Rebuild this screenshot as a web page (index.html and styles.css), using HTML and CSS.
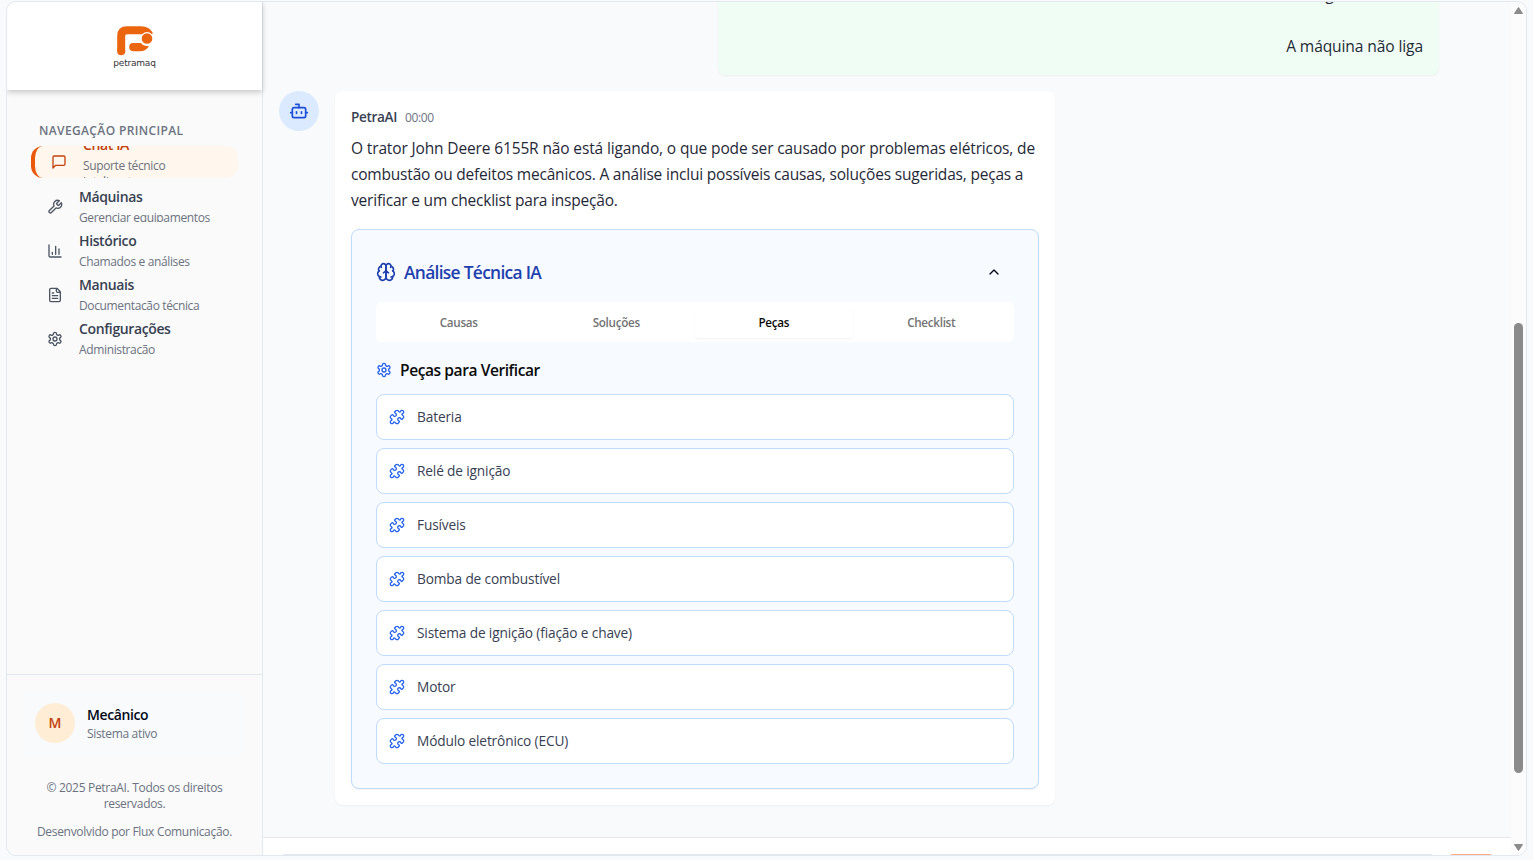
FILE: index.html
```html
<!DOCTYPE html>
<html lang="pt-BR">
<head>
<meta charset="utf-8">
<title>PetraAI</title>
<link rel="stylesheet" href="styles.css">
</head>
<body>
<svg class="defs" width="0" height="0">
  <defs>
    <symbol id="gear" viewBox="0 0 24 24"><path d="M12.22 2h-.44a2 2 0 0 0-2 2v.18a2 2 0 0 1-1 1.73l-.43.25a2 2 0 0 1-2 0l-.15-.08a2 2 0 0 0-2.73.73l-.22.38a2 2 0 0 0 .73 2.73l.15.1a2 2 0 0 1 1 1.72v.51a2 2 0 0 1-1 1.74l-.15.09a2 2 0 0 0-.73 2.73l.22.38a2 2 0 0 0 2.73.73l.15-.08a2 2 0 0 1 2 0l.43.25a2 2 0 0 1 1 1.73V20a2 2 0 0 0 2 2h.44a2 2 0 0 0 2-2v-.18a2 2 0 0 1 1-1.73l.43-.25a2 2 0 0 1 2 0l.15.08a2 2 0 0 0 2.73-.73l.22-.39a2 2 0 0 0-.73-2.73l-.15-.08a2 2 0 0 1-1-1.74v-.5a2 2 0 0 1 1-1.74l.15-.09a2 2 0 0 0 .73-2.73l-.22-.38a2 2 0 0 0-2.73-.73l-.15.08a2 2 0 0 1-2 0l-.43-.25a2 2 0 0 1-1-1.73V4a2 2 0 0 0-2-2z"/><circle cx="12" cy="12" r="3"/></symbol>
    <symbol id="puzzle" viewBox="0 0 24 24"><path d="M19.439 7.85c-.049.322.059.648.289.878l1.568 1.568c.47.47.706 1.087.706 1.704s-.235 1.233-.706 1.704l-1.611 1.611a.98.98 0 0 1-.837.276c-.47-.07-.802-.48-.968-.925a2.501 2.501 0 1 0-3.214 3.214c.446.166.855.497.925.968a.979.979 0 0 1-.276.837l-1.61 1.61a2.404 2.404 0 0 1-1.705.707 2.402 2.402 0 0 1-1.704-.706l-1.568-1.568a1.026 1.026 0 0 0-.877-.29c-.493.074-.84.504-1.02.968a2.5 2.5 0 1 1-3.237-3.237c.464-.18.894-.527.967-1.02a1.026 1.026 0 0 0-.289-.877l-1.568-1.568A2.402 2.402 0 0 1 1.998 12c0-.617.236-1.234.706-1.704L4.23 8.77c.24-.24.581-.353.917-.303.515.077.877.528 1.073 1.01a2.5 2.5 0 1 0 3.259-3.259c-.482-.196-.933-.558-1.01-1.073-.05-.336.062-.676.303-.917l1.525-1.525A2.402 2.402 0 0 1 12 1.998c.617 0 1.234.236 1.704.706l1.568 1.568c.23.23.556.338.877.29.493-.074.84-.504 1.02-.968a2.5 2.5 0 1 1 3.237 3.237c-.464.18-.894.527-.967 1.02Z"/></symbol>
  </defs>
</svg>
<div class="app">
  <aside class="sidebar">
    <header class="brand">
      <svg class="brand-mark" viewBox="0 0 38 31">
        <path d="M5.200 25.500V10Q5.200 4.200 11 4.200H25Q31 4.200 33.500 9" fill="none" stroke="#ea650d" stroke-width="8"/>
        <circle cx="5.200" cy="25.300" r="4" fill="#ea650d"/>
        <path d="M17 17H25Q27.500 20.300 33 20.200Q30 25.200 24 25.200H17Q13.200 25.200 13.200 21.100T17 17Z" fill="#ea650d"/>
        <circle cx="31" cy="12.500" r="6.500" fill="#fff"/>
        <circle cx="31" cy="12.500" r="5.300" fill="#ea650d"/>
      </svg>
      <span class="brand-name">petramaq</span>
    </header>
    <nav class="nav">
      <h2 class="nav-title">NAVEGAÇÃO PRINCIPAL</h2>
      <a class="nav-item active">
        <svg class="icon i16" viewBox="0 0 24 24"><path d="M21 15a2 2 0 0 1-2 2H7l-4 4V5a2 2 0 0 1 2-2h14a2 2 0 0 1 2 2z"/></svg>
        <div class="nav-text"><b>Chat IA</b><span>Suporte técnico inteligente</span></div>
      </a>
      <a class="nav-item">
        <svg class="icon i16" viewBox="0 0 24 24"><path d="M14.700 6.300a1 1 0 0 0 0 1.400l1.600 1.600a1 1 0 0 0 1.400 0l3.770-3.770a6 6 0 0 1-7.940 7.940l-6.910 6.910a2.120 2.120 0 0 1-3-3l6.910-6.910a6 6 0 0 1 7.940-7.940l-3.760 3.760z"/></svg>
        <div class="nav-text"><b>Máquinas</b><span>Gerenciar equipamentos</span></div>
      </a>
      <a class="nav-item">
        <svg class="icon i16" viewBox="0 0 24 24"><path d="M3 3v16a2 2 0 0 0 2 2h16M18 17V9M13 17V5M8 17v-3"/></svg>
        <div class="nav-text"><b>Histórico</b><span>Chamados e análises</span></div>
      </a>
      <a class="nav-item">
        <svg class="icon i16" viewBox="0 0 24 24"><path d="M15 2H6a2 2 0 0 0-2 2v16a2 2 0 0 0 2 2h12a2 2 0 0 0 2-2V7ZM14 2v4a2 2 0 0 0 2 2h4M10 9H8M16 13H8M16 17H8"/></svg>
        <div class="nav-text"><b>Manuais</b><span>Documentação técnica</span></div>
      </a>
      <a class="nav-item">
        <svg class="icon i16"><use href="#gear"/></svg>
        <div class="nav-text"><b>Configurações</b><span>Administração</span></div>
      </a>
    </nav>
    <footer class="side-foot">
      <div class="user">
        <div class="user-avatar">M</div>
        <div class="user-text"><b>Mecânico</b><span>Sistema ativo</span></div>
      </div>
      <p class="legal">© 2025 PetraAI. Todos os direitos<br>reservados.</p>
      <p class="legal credit">Desenvolvido por Flux Comunicação.</p>
    </footer>
  </aside>
  <main class="main">
    <section class="chat">
      <div class="mine"><p>Código de defeito:</p><p>A máquina não liga</p></div>
      <div class="reply">
        <div class="bot"><svg class="icon i20" viewBox="0 0 24 24"><path d="M12 8V4H8"/><rect width="16" height="12" x="4" y="8" rx="2"/><path d="M2 14h2M20 14h2M15 13v2M9 13v2"/></svg></div>
        <article class="bubble">
          <div class="meta"><b>PetraAI</b><span>00:00</span></div>
          <p class="answer">O trator John Deere 6155R não está ligando, o que pode ser causado por problemas elétricos, de<br><span class="tight">combustão ou defeitos mecânicos. A análise inclui possíveis causas, soluções sugeridas, peças a<br>verificar e um checklist para inspeção.</span></p>
          <section class="panel">
            <div class="panel-head">
              <svg class="icon i20" viewBox="0 0 24 24"><path d="M12 5a3 3 0 1 0-5.997.125 4 4 0 0 0-2.526 5.770 4 4 0 0 0 .556 6.588A4 4 0 1 0 12 18Z"/><path d="M12 5a3 3 0 1 1 5.997.125 4 4 0 0 1 2.526 5.770 4 4 0 0 1-.556 6.588A4 4 0 1 1 12 18Z"/><path d="M15 13a4.500 4.500 0 0 1-3-4 4.500 4.500 0 0 1-3 4"/><path d="M17.599 6.500a3 3 0 0 0 .399-1.375M6.003 5.125A3 3 0 0 0 6.401 6.500M3.477 10.896a4 4 0 0 1 .585-.396M19.938 10.500a4 4 0 0 1 .585.396M6 18a4 4 0 0 1-1.967-.516M19.967 17.484A4 4 0 0 1 18 18"/></svg>
              <h3>Análise Técnica IA</h3>
              <svg class="icon i16 chevron" viewBox="0 0 24 24"><path d="m18 15-6-6-6 6"/></svg>
            </div>
            <div class="tabs"><span class="tab">Causas</span><span class="tab">Soluções</span><span class="tab on">Peças</span><span class="tab">Checklist</span></div>
            <div class="sub"><svg class="icon i16"><use href="#gear"/></svg><h4>Peças para Verificar</h4></div>
            <ul class="parts">
              <li><svg class="icon i16"><use href="#puzzle"/></svg><span>Bateria</span></li>
              <li><svg class="icon i16"><use href="#puzzle"/></svg><span>Relé de ignição</span></li>
              <li><svg class="icon i16"><use href="#puzzle"/></svg><span>Fusíveis</span></li>
              <li><svg class="icon i16"><use href="#puzzle"/></svg><span>Bomba de combustível</span></li>
              <li><svg class="icon i16"><use href="#puzzle"/></svg><span>Sistema de ignição (fiação e chave)</span></li>
              <li><svg class="icon i16"><use href="#puzzle"/></svg><span>Motor</span></li>
              <li><svg class="icon i16"><use href="#puzzle"/></svg><span>Módulo eletrônico (ECU)</span></li>
            </ul>
          </section>
        </article>
      </div>
    </section>
    <div class="composer"><div class="field"></div><div class="send"></div></div>
  </main>
  <div class="scrollbar">
    <svg width="9" height="7" viewBox="0 0 9 7"><path d="M4.500 .5 8.500 6.500H.5Z" fill="#8b8b8b" stroke="#8b8b8b" stroke-linejoin="round"/></svg>
    <div class="thumb"></div>
    <svg width="9" height="7" viewBox="0 0 9 7"><path d="M4.500 6.500 8.500 .5H.5Z" fill="#8b8b8b" stroke="#8b8b8b" stroke-linejoin="round"/></svg>
  </div>
</div>
</body>
</html>
```
FILE: styles.css
```css
* { box-sizing: border-box; margin: 0; padding: 0; }
body { width: 1533px; height: 860px; overflow: hidden; padding: 1px 6px 4px; background: #f8fafc; color: #020817; font-family: "Open Sans", "Noto Sans", sans-serif; font-size: 14px; }
b, h2, h3, h4 { font-weight: 600; }
.defs { position: absolute; }
.icon { fill: none; stroke: currentColor; stroke-width: 2; stroke-linecap: round; stroke-linejoin: round; flex: none; }
.i16 { width: 16px; height: 16px; }
.i20 { width: 20px; height: 20px; }

.app { display: flex; height: 855px; border: 1px solid #e2e8f0; border-radius: 10px; overflow: hidden; }

.sidebar { width: 256px; flex: none; display: flex; flex-direction: column; background: #fafafa; border-right: 1px solid #e2e8f0; }
.brand { height: 88px; flex: none; display: flex; flex-direction: column; align-items: center; padding-top: 24px; background: #fff; box-shadow: 0 2px 6px rgba(0, 0, 0, .22); }
.brand-mark { width: 38px; height: 31px; }
.brand-name { font: 9px/12px "DejaVu Sans", sans-serif; color: #333; letter-spacing: -.2px; }

.nav { flex: 1; padding: 33px 24px 0; }
.nav-title { height: 16px; padding-left: 8px; margin-bottom: 7px; font-size: 12px; line-height: 16px; color: #6b7280; letter-spacing: .37px; white-space: nowrap; }
.nav-item { display: flex; align-items: center; height: 32px; width: 207px; margin-bottom: 12px; padding: 2px 0 0 16px; gap: 16px; overflow: hidden; color: #4b5563; border-radius: 8px; }
.nav-text { display: flex; flex-direction: column; width: 140px; }
.nav-text b { font-size: 14px; line-height: 18px; color: #374151; letter-spacing: -.38px; }
.nav-text span { font-size: 12px; line-height: 16px; color: #6b7280; letter-spacing: -.36px; margin-top: 4px; }
.nav-item.active { background: #fff7ed; border-left: 4px solid #ea580c; border-radius: 12px; color: #c2410c; }
.active .icon { margin-top: -2px; }
.active .nav-text { width: 100px; }
.active .nav-text b { color: #c2410c; }

.side-foot { height: 181px; border-top: 1px solid #e2e8f0; padding-top: 16px; }
.user { display: flex; align-items: center; gap: 12px; height: 64px; margin: 0 16px; padding-left: 12px; background: #f8fafc; border-radius: 8px; }
.user-avatar { width: 40px; height: 40px; padding-bottom: 2px; border-radius: 50%; background: #ffedd5; color: #c2410c; font-weight: 600; display: grid; place-items: center; }
.user-text { display: flex; flex-direction: column; }
.user-text b { line-height: 20px; letter-spacing: -.4px; }
.user-text span { margin-top: 1px; font-size: 12px; line-height: 16px; color: #6b7280; letter-spacing: -.33px; }
.legal { margin-top: 25px; text-align: center; font-size: 12px; line-height: 16px; color: #6b7280; letter-spacing: -.31px; }
.legal.credit { margin-top: 12px; }

.main { flex: 1; display: flex; flex-direction: column; min-width: 0; }
.chat { flex: 1; min-height: 0; overflow: hidden; display: flex; flex-direction: column; justify-content: flex-end; padding: 0 72px 32px 16px; gap: 16px; }
.mine { width: 721px; height: 130px; flex: none; align-self: flex-end; display: flex; flex-direction: column; justify-content: flex-end; gap: 26px; padding: 16px; background: #f0fdf4; border-radius: 8px; box-shadow: 0 1px 2px rgba(0, 0, 0, .05); text-align: right; font-size: 15.6px; line-height: 26px; color: #1f2937; letter-spacing: -.12px; }
.reply { display: flex; gap: 16px; flex: none; }
.bot { width: 40px; height: 40px; border-radius: 50%; background: #dbeafe; color: #1d4ed8; display: grid; place-items: center; }
.bubble { width: 720px; height: 714px; padding: 16px; background: #fff; border-radius: 8px; box-shadow: 0 1px 2px rgba(0, 0, 0, .05); }
.meta { display: flex; align-items: center; gap: 8px; height: 20px; margin-bottom: 8px; color: #374151; }
.meta b { margin-top: -1px; font-size: 13.6px; letter-spacing: -.35px; }
.meta span { font-size: 12px; color: #6b7280; letter-spacing: -.35px; }
.answer { font-size: 15.5px; line-height: 26px; color: #1f2937; white-space: nowrap; letter-spacing: -.14px; }
.tight { letter-spacing: -.195px; }

.panel { height: 560px; margin-top: 16px; padding: 24px; background: #f7faff; border: 1px solid #bfdbfe; border-radius: 8px; box-shadow: 0 1px 2px rgba(0, 0, 0, .05); }
.panel-head { display: flex; align-items: center; height: 36px; color: #1e40af; }
.panel-head h3 { margin-left: 8px; font-size: 17.4px; line-height: 28px; letter-spacing: -.7px; }
.chevron { margin-left: auto; margin-right: 12px; color: #020817; }
.tabs { display: grid; grid-template-columns: repeat(4, 1fr); height: 40px; margin-top: 12px; padding: 4px; background: #fff; border-radius: 6px; }
.tab { display: grid; place-items: center; font-size: 11.7px; font-weight: 600; color: #737373; letter-spacing: -.3px; border-radius: 4px; }
.tab.on { color: #0a0a0a; box-shadow: 0 1px 2px rgba(0, 0, 0, .06); }
.sub { display: flex; align-items: center; gap: 8px; height: 24px; margin-top: 16px; color: #2563eb; }
.sub h4 { font-size: 15.6px; color: #0a0a0a; letter-spacing: -.45px; }
.parts { list-style: none; display: grid; gap: 8px; margin-top: 12px; }
.parts li { display: flex; align-items: center; gap: 12px; height: 46px; padding: 0 12px; background: #fff; border: 1px solid #bfdbfe; border-radius: 8px; color: #2563eb; }
.parts span { margin-top: -1px; color: #374151; font-size: 13.7px; letter-spacing: -.15px; }

.composer { height: 18px; flex: none; display: flex; gap: 11px; padding: 16px 16px 0; background: #fff; border-top: 1px solid #e5e7eb; overflow: hidden; }
.field { width: 1157px; height: 40px; border: 1px solid #e2e8f0; border-radius: 6px; }
.send { width: 48px; height: 40px; background: #fba981; border-radius: 6px; }

.scrollbar { width: 15px; flex: none; display: flex; flex-direction: column; align-items: center; padding: 5px 0 4px; background: #fcfcfc; }
.thumb { width: 9px; height: 450px; margin: 309px 0 auto; background: #8b8b8b; border-radius: 5px; }
```
